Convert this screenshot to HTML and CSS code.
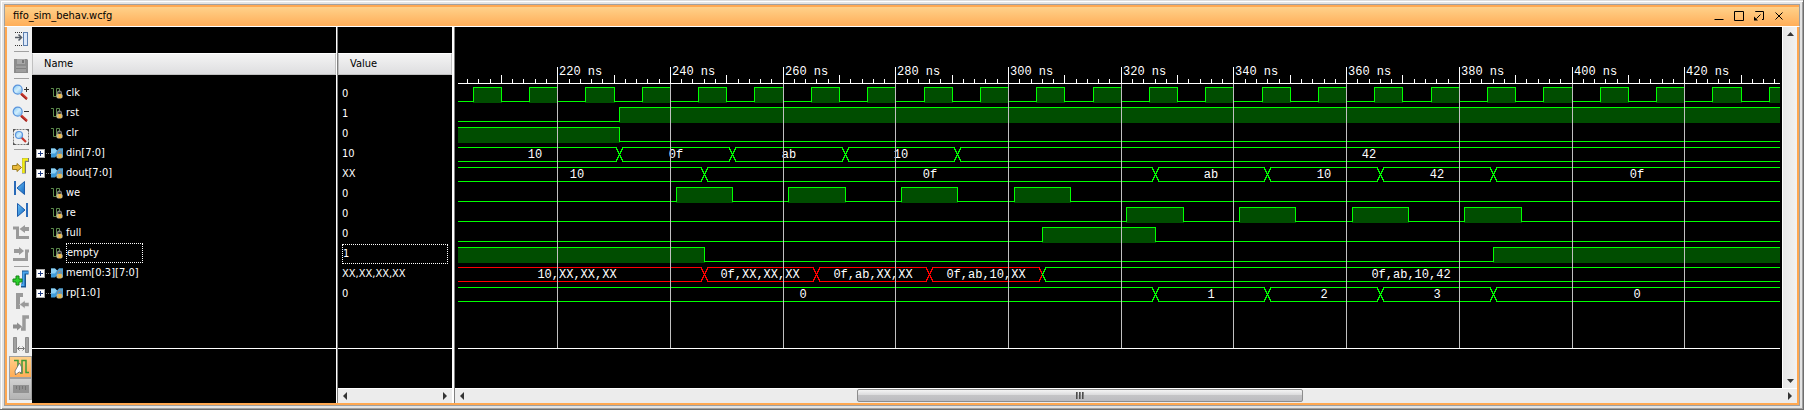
FILE: index.html
```html
<!DOCTYPE html>
<html lang="en">
<head>
<meta charset="utf-8">
<title>fifo_sim_behav.wcfg</title>
<link rel="stylesheet" href="styles.css">
</head>
<body>
<svg class="defs" aria-hidden="true">
  <defs>
    <linearGradient id="lens" x1="0" y1="0" x2="1" y2="1"><stop offset="0" stop-color="#7cc4f4"/><stop offset=".5" stop-color="#d2eefc"/><stop offset="1" stop-color="#6fb4ee"/></linearGradient>
    <linearGradient id="blue" x1="0" y1="0" x2="1" y2="1"><stop offset="0" stop-color="#6cc4f8"/><stop offset="1" stop-color="#1566c0"/></linearGradient>
    <symbol id="lock" viewBox="0 0 8 9">
      <path d="M2 4V2.5a2 2 0 0 1 4 0V4" fill="none" stroke="#8c8c8c" stroke-width="1.4"/>
      <rect x=".5" y="3.5" width="7" height="5.5" rx="2" fill="#c9b888"/>
      <rect x="3" y="4" width="2.6" height="4.4" fill="#f2b83c"/>
    </symbol>
    <symbol id="sig" viewBox="0 0 12 12">
      <path d="M0 1.5h2.5v8h3v-8h3v4" fill="none" stroke="#5c8a4c"/>
      <use href="#lock" x="5" y="3" width="7" height="9"/>
    </symbol>
    <symbol id="bus" viewBox="0 0 12 12">
      <path d="M0 1.500h4l2 2 2-2h4v9H8l-2-2-2 2H0z" fill="#3f9bd8"/>
      <path d="M0 1.500h4l2 2-2 3H0z" fill="#8fd0f2"/>
      <path d="M8 1.500h4v3H7z" fill="#5b9fcb"/>
      <use href="#lock" x="5" y="3" width="7" height="9"/>
    </symbol>
  </defs>
</svg>

<main class="window">
  <header class="titlebar">
    <h1 class="title">fifo_sim_behav.wcfg</h1>
    <div class="controls">
      <button class="control" aria-label="Minimize"><svg viewBox="0 0 10 10"><path d="M.5 8.500h9"/></svg></button>
      <button class="control" aria-label="Maximize"><svg viewBox="0 0 10 10"><path d="M.5 .5h9v9h-9z"/></svg></button>
      <button class="control" aria-label="Float"><svg viewBox="0 0 10 10"><path d="M1.500 1V.5h8v8H8M6.500 3.500l-4 4"/><path d="M0 5.500v4h4z" fill="#000" stroke="none"/></svg></button>
      <button class="control" aria-label="Close"><svg viewBox="0 0 10 10"><path d="M1.500 1.500l7 7m0-7l-7 7"/></svg></button>
    </div>
  </header>

  <div class="content">
    <nav class="toolbar" aria-label="Wave tools">
      <button class="tool" aria-label="Dock"><svg viewBox="0 0 20 20"><path d="M4 3.500h8M4 16.500h8" stroke="#333" stroke-dasharray="1 1"/><path d="M4 8.500h6M7.500 5.500l3 3-3 3" fill="none" stroke="#555c66" stroke-width="1.500"/><rect x="12.500" y="3.500" width="4" height="13" fill="#dce8fa" stroke="#5d7fae"/></svg></button>
      <span class="sep"></span>
      <button class="tool" aria-label="Save"><svg viewBox="0 0 20 20"><path d="M3 3h13l1 1v13H3z" fill="#8c8c8c"/><path d="M6 3h8v5H6z" fill="#a8a8a8"/><path d="M11 4h2v3h-2z" fill="#777"/><path d="M5 10h10v6H5z" fill="#9e9e9e"/><path d="M5 12.500h10" stroke="#808080"/></svg></button>
      <span class="sep"></span>
      <button class="tool" aria-label="Zoom in"><svg viewBox="0 0 20 20"><path d="M10 10.500l6 5.500" stroke="#c8352c" stroke-width="2.500"/><path d="M10 11.500l5.500 5" stroke="#8c1c18"/><circle cx="6.700" cy="6.700" r="4.500" fill="url(#lens)" stroke="#5a94dc" stroke-width="1.200"/><path d="M13 6.500h5M15.500 4v5" stroke="#333"/></svg></button>
      <button class="tool" aria-label="Zoom out"><svg viewBox="0 0 20 20"><path d="M10 10.500l6 5.500" stroke="#c8352c" stroke-width="2.500"/><path d="M10 11.500l5.500 5" stroke="#8c1c18"/><circle cx="6.700" cy="6.700" r="4.500" fill="url(#lens)" stroke="#5a94dc" stroke-width="1.200"/><path d="M13 6.500h5" stroke="#333"/></svg></button>
      <button class="tool" aria-label="Zoom fit"><svg viewBox="0 0 20 20"><rect x="2.500" y="2.500" width="15" height="15" fill="none" stroke="#777" stroke-dasharray="2 1"/><path d="M2 2h3L2 5zM18 2v3l-3-3zM2 18v-3l3 3zM18 18h-3l3-3z" fill="#555"/><path d="M10 10l5 5" stroke="#c8352c" stroke-width="2.200"/><circle cx="8" cy="8" r="3.500" fill="url(#lens)" stroke="#5a94dc" stroke-width="1.200"/></svg></button>
      <span class="sep sep--wide"></span>
      <button class="tool" aria-label="Go to time"><svg viewBox="0 0 20 20"><path d="M13 17.500V4h5" fill="none" stroke="#777" stroke-width="4"/><path d="M12.500 17V3.500H17" fill="none" stroke="#f4ee10" stroke-width="2.500"/><path d="M1.500 9.500H6v-2l4.500 4L6 15.500v-2H1.500z" fill="#e8b93c" stroke="#9a7a1c"/></svg></button>
      <button class="tool" aria-label="Previous transition"><svg viewBox="0 0 20 20"><path d="M3 3h2v14H3z" fill="#2a6ab8"/><path d="M13.500 3.500v13L6 10z" fill="url(#blue)" stroke="#1c5cab"/></svg></button>
      <button class="tool" aria-label="Next transition"><svg viewBox="0 0 20 20"><path d="M15 3h2v14h-2z" fill="#2a6ab8"/><path d="M6.500 3.500v13L14 10z" fill="url(#blue)" stroke="#1c5cab"/></svg></button>
      <button class="tool" aria-label="Previous edge"><svg viewBox="0 0 20 20"><path d="M2 6h4.500v9.500H18" fill="none" stroke="#9a9a9a" stroke-width="3"/><path d="M18 5h-4V3L8.500 7l5.500 4V9h4z" fill="#9a9a9a"/></svg></button>
      <button class="tool" aria-label="Next edge"><svg viewBox="0 0 20 20"><path d="M2 15.500h13.500V7H18" fill="none" stroke="#9a9a9a" stroke-width="3"/><path d="M3 5h5V3l5 4-5 4V9H3z" fill="#9a9a9a"/></svg></button>
      <span class="sep sep--tight"></span>
      <button class="tool" aria-label="Add marker"><svg viewBox="0 0 20 20"><path d="M10 16.500h3v-13h4.500" fill="none" stroke="#1a5590" stroke-width="4"/><path d="M10 16h2.500V3.500h5" fill="none" stroke="#4aa6ee" stroke-width="2"/><path d="M5 7h3v3h3v3H8v3H5v-3H2v-3h3z" fill="#2cd02c" stroke="#148414"/></svg></button>
      <button class="tool" aria-label="Previous marker"><svg viewBox="0 0 20 20"><path d="M7 18V4h5" fill="none" stroke="#9a9a9a" stroke-width="4"/><path d="M18 11.500h-4v-2L8.500 13.500l5.500 4v-2h4z" fill="#9a9a9a" stroke="#eee" stroke-width=".5"/></svg></button>
      <button class="tool" aria-label="Next marker"><svg viewBox="0 0 20 20"><path d="M10 16h3V4h5" fill="none" stroke="#9a9a9a" stroke-width="3.500"/><path d="M2 11.500h4v-2l5 4-5 4v-2H2z" fill="#8e8e8e"/></svg></button>
      <button class="tool" aria-label="Measure"><svg viewBox="0 0 20 20"><path d="M2.500 2.500h3v15h-3zM14.500 2.500h3v15h-3z" fill="#a0a0a0" stroke="#8c8c8c"/><path d="M7 13.500h6M8.500 11.500l-2 2 2 2M11.500 11.500l2 2-2 2" fill="none" stroke="#777"/></svg></button>
      <button class="tool tool--active" aria-label="Snap to transition" aria-pressed="true"><svg viewBox="0 0 20 20"><path d="M3 3.500h4V15M9 16h2V3.500h4V15.500h3" fill="none" stroke="#3f9a36" stroke-width="1.500"/><path d="M8.500 6l2 4v6l-2-1-2 1-2 2-.5-4z" fill="#fff" stroke="#666" stroke-width=".8"/></svg></button>
      <button class="tool tool--ruler" aria-label="Floating ruler"><svg viewBox="0 0 20 20"><path d="M2 6h16v8H2z" fill="#929292"/><path d="M5.500 7v3M8.500 7v4M11.500 7v3M14.500 7v4" stroke="#777"/></svg></button>
    </nav>

    <section class="pane pane--name">
      <div class="blank"></div>
      <h2 class="head">Name</h2>
      <ul class="rows">
        <li class="row"><svg class="kind"><use href="#sig"/></svg><span>clk</span></li>
        <li class="row"><svg class="kind"><use href="#sig"/></svg><span>rst</span></li>
        <li class="row"><svg class="kind"><use href="#sig"/></svg><span>clr</span></li>
        <li class="row row--bus"><button class="expand" aria-label="Expand din"></button><svg class="kind"><use href="#bus"/></svg><span>din[7:0]</span></li>
        <li class="row row--bus"><button class="expand" aria-label="Expand dout"></button><svg class="kind"><use href="#bus"/></svg><span>dout[7:0]</span></li>
        <li class="row"><svg class="kind"><use href="#sig"/></svg><span>we</span></li>
        <li class="row"><svg class="kind"><use href="#sig"/></svg><span>re</span></li>
        <li class="row"><svg class="kind"><use href="#sig"/></svg><span>full</span></li>
        <li class="row"><svg class="kind"><use href="#sig"/></svg><span class="focus focus--name">empty</span></li>
        <li class="row row--bus"><button class="expand" aria-label="Expand mem"></button><svg class="kind"><use href="#bus"/></svg><span>mem[0:3][7:0]</span></li>
        <li class="row row--bus"><button class="expand" aria-label="Expand rp"></button><svg class="kind"><use href="#bus"/></svg><span>rp[1:0]</span></li>
      </ul>
    </section>

    <section class="pane pane--value">
      <div class="blank"></div>
      <h2 class="head">Value</h2>
      <ul class="rows rows--value">
        <li class="row">0</li>
        <li class="row">1</li>
        <li class="row">0</li>
        <li class="row">10</li>
        <li class="row">XX</li>
        <li class="row">0</li>
        <li class="row">0</li>
        <li class="row">0</li>
        <li class="row"><span class="focus focus--value">1</span></li>
        <li class="row">XX,XX,XX,XX</li>
        <li class="row">0</li>
      </ul>
      <div class="hscroll">
        <button class="arrow" aria-label="Scroll left"><svg viewBox="0 0 8 8"><path d="M6 0v8L2 4z"/></svg></button>
        <button class="arrow" aria-label="Scroll right"><svg viewBox="0 0 8 8"><path d="M2 0v8l4-4z"/></svg></button>
      </div>
    </section>

    <section class="viewer">
      <div class="view">
        <div class="canvas"><svg class="wave" id="wave" role="img" aria-label="Signal waveforms"></svg></div>
        <div class="vscroll">
          <button class="arrow" aria-label="Scroll up"><svg viewBox="0 0 8 8"><path d="M1 6h7L4.500 2z"/></svg></button>
          <button class="arrow" aria-label="Scroll down"><svg viewBox="0 0 8 8"><path d="M1 2h7L4.500 6z"/></svg></button>
        </div>
      </div>
      <div class="hscroll hscroll--wave">
        <button class="arrow" aria-label="Scroll left"><svg viewBox="0 0 8 8"><path d="M6 0v8L2 4z"/></svg></button>
        <div class="track"><div class="thumb"><i></i><i></i><i></i></div></div>
        <button class="arrow" aria-label="Scroll right"><svg viewBox="0 0 8 8"><path d="M2 0v8l4-4z"/></svg></button>
      </div>
    </section>
  </div>
</main>
<script src="wave.js"></script>
</body>
</html>
```
FILE: styles.css
```css
* { box-sizing: border-box; }

body {
  margin: 0;
  background: #e4e4e4;
  color: #000;
  font: 11px/16px "DejaVu Sans Condensed", Tahoma, sans-serif;
}

button { margin: 0; padding: 0; border: 0; background: none; }
h1, h2 { margin: 0; font-size: inherit; font-weight: normal; }
ul { margin: 0; padding: 0; list-style: none; }
.defs { position: absolute; width: 0; height: 0; }

.window {
  display: flex;
  flex-direction: column;
  min-height: 100vh;
  padding: 4px 3px 3px 4px;
  background: #e4e4e4;
  border-right: 1px solid #6e6e6e;
  border-bottom: 1px solid #6e6e6e;
  box-shadow: inset 1px 1px #dcdcdc, inset 2px 2px #fff, inset -1px -1px #a0a0a0;
}

.titlebar {
  display: flex;
  align-items: center;
  justify-content: space-between;
  height: 23px;
  padding: 0 15px 0 8px;
  border: 1px solid #a0a0a0;
  border-bottom: 1px solid #fff;
  background: linear-gradient(#ffa851 2px, #ffd18a 2px, #ffae59);
}
.controls { display: flex; gap: 10px; }
.control { width: 10px; height: 10px; }
.control svg { display: block; width: 10px; height: 10px; fill: none; stroke: #000; }

.content {
  display: flex;
  flex: 1;
  border: solid #ffa851;
  border-width: 0 2px 2px;
  outline: 1px solid #a0a0a0;
  margin: 0 1px 1px;
  clip-path: inset(0 -1px -1px);
}

.toolbar {
  display: flex;
  flex-direction: column;
  width: 25px;
  padding: 1px 0 0 2px;
  background: #f0f0f0;
}
.tool { display: flex; align-items: center; justify-content: center; width: 23px; height: 22px; }
.tool svg { width: 20px; height: 20px; flex: none; }
.tool--active { border: 1px solid #a0a0a0; background: linear-gradient(#ffcf8a, #ffad57); }
.tool--ruler { border: 1px solid #a0a0a0; background: linear-gradient(#d2d2d2, #b4b4b4); }
.sep { height: 5px; margin-left: 5px; margin-right: 3px; background: linear-gradient(#a0a0a0, #a0a0a0) 0 1px / 100% 1px no-repeat; }
.sep--wide { height: 7px; }
.sep--tight { height: 3px; }

.pane { display: flex; flex-direction: column; background: #000; color: #fff; }
.pane--name { width: 306px; border-right: 1px solid #808080; box-shadow: inset -1px 0 #fff; padding-right: 1px; }
.pane--value { width: 117px; border-right: 1px solid #808080; box-shadow: inset -2px 0 #fff; padding-right: 2px; }
.blank { height: 26px; }
.head {
  height: 22px;
  padding: 2px 0 0 11px;
  border: 1px solid #c0c0c0;
  border-top-color: #fff;
  background: linear-gradient(#f4f4f4, #dedee0);
  color: #000;
}
.rows { padding: 8px 0 45px; border-bottom: 1px solid #fff; }
.rows--value { padding: 9px 0 44px 4px; }
.row { display: flex; align-items: center; gap: 3px; height: 20px; padding-left: 19px; }
.row--bus { gap: 0; padding-left: 4px; }
.rows--value .row { padding-left: 0; }
.kind { width: 12px; height: 12px; }
.row--bus .kind { margin-left: 6px; margin-right: 3px; }
.expand {
  position: relative;
  width: 9px;
  height: 9px;
  border: 1px solid #aaa;
  background:
    linear-gradient(#203a80, #203a80) center / 5px 1px no-repeat,
    linear-gradient(#203a80, #203a80) center / 1px 5px no-repeat,
    #fff;
}
.expand::after {
  content: "";
  position: absolute;
  left: 9px;
  top: 3px;
  width: 5px;
  border-top: 1px dotted #808080;
}
.focus { height: 20px; border: 1px dotted #fff; line-height: 18px; }
.focus--name { width: 77px; }
.focus--value { width: 106px; }

.hscroll {
  display: flex;
  justify-content: space-between;
  height: 15px;
  margin-top: auto;
  border-top: 1px solid #fff;
  background: #ececec;
}
.arrow { width: 14px; height: 14px; display: flex; align-items: center; justify-content: center; }
.arrow svg { width: 8px; height: 8px; fill: #333; }

.viewer { display: flex; flex: 1; flex-direction: column; min-width: 0; }
.view { display: flex; flex: 1; }
.canvas { flex: 1; min-width: 0; padding: 0 2px 0 3px; background: #000; }
.wave { display: block; width: 100%; height: 322px; shape-rendering: crispEdges; }
.vscroll {
  display: flex;
  flex-direction: column;
  justify-content: space-between;
  width: 15px;
  border-left: 1px solid #fff;
  background: linear-gradient(90deg, #e6e6e6, #f2f2f2);
}
.track { flex: 1; }
.thumb {
  display: flex;
  align-items: center;
  justify-content: center;
  gap: 1px;
  width: 34%;
  height: 13px;
  margin-left: 29.5%;
  border: 1px solid #8c8c8c;
  border-radius: 2px;
  background: linear-gradient(#f4f4f4, #d8d8da 50%, #c4c4c6 50%, #bcbcc0);
}
.thumb i { width: 2px; height: 7px; background: linear-gradient(90deg, #333, #999); }

.line { fill: none; stroke: #0f0; }
.line--unknown { stroke: #f00; }
.fill { fill: #004d00; }
.axis { fill: none; stroke: #fff; }
.grid { fill: none; stroke: #c0c0c0; }
.label { fill: #fff; font: 12px "Liberation Mono", monospace; }
.label--mid { text-anchor: middle; }
```
FILE: wave.js
```js
const svg = document.getElementById('wave');
const NS = 'http://www.w3.org/2000/svg';
const PX_PER_NS = 5.635;
const T0 = 202.39;
const LEFT = -8;          // the view starts slightly before its visible edge
const ROW = 20;
const TOP = 60;
const AXIS = 56;
const BOTTOM = 321;

const clock = [];
for (let t = 205; t < 800; t += 10) clock.push([t, t + 5]);

const signals = [
  { high: clock },
  { high: [[231, Infinity]] },
  { high: [[0, 231]] },
  { bus: [[0, '10'], [231, '0f'], [251, 'ab'], [271, '10'], [291, '42']] },
  { bus: [[0, '10'], [246, '0f'], [326, 'ab'], [346, '10'], [366, '42'], [386, '0f']] },
  { high: [[241, 251], [261, 271], [281, 291], [301, 311]] },
  { high: [[321, 331], [341, 351], [361, 371], [381, 391]] },
  { high: [[306, 326]] },
  { high: [[0, 246], [386, Infinity]] },
  { bus: [[0, '10,XX,XX,XX', 1], [246, '0f,XX,XX,XX', 1], [266, '0f,ab,XX,XX', 1], [286, '0f,ab,10,XX', 1], [306, '0f,ab,10,42']] },
  { bus: [[0, '0'], [326, '1'], [346, '2'], [366, '3'], [386, '0']] }
];

function add(name, attrs, text) {
  const el = document.createElementNS(NS, name);
  for (const key in attrs) el.setAttribute(key, attrs[key]);
  if (text) el.textContent = text;
  svg.appendChild(el);
}

function draw() {
  svg.replaceChildren();
  const width = svg.clientWidth;
  const x = t => Math.max(LEFT, Math.min(width, Math.round((t - T0) * PX_PER_NS)));
  const visible = t => (t - T0) * PX_PER_NS < width;

  signals.forEach((signal, i) => {
    const top = TOP + i * ROW;
    const hi = top + 0.5;
    const lo = top + 14.5;

    if (signal.high) {
      let d = `M${LEFT} ${lo}`;
      for (const [a, b] of signal.high.filter(r => visible(r[0]))) {
        const xa = x(a), xb = x(b);
        add('rect', { class: 'fill', x: Math.max(xa, 0), y: top, width: xb + 1 - Math.max(xa, 0), height: 16 });
        d += `H${xa + 0.5}V${hi}H${xb + 0.5}`;
        if (xb < width) d += `V${lo}`;
      }
      if (!d.endsWith(`H${width + 0.5}`)) d += `H${width}`;
      add('path', { class: 'line', d });
      return;
    }

    signal.bus.forEach(([t, text, unknown], n) => {
      const next = signal.bus[n + 1];
      const a = x(t), b = next ? x(next[0]) : width;
      const mid = top + 7.5;
      const start = n ? `M${a + 0.5} ${mid}L${a + 4} ` : `M${LEFT} `;
      const end = y => next ? `H${b - 3}L${b + 0.5} ${mid}` : `H${b}`;
      add('path', {
        class: unknown ? 'line line--unknown' : 'line',
        d: `${start}${hi}${end(hi)}${start}${lo}${end(lo)}`
      });
      add('text', { class: 'label label--mid', x: Math.round((a + b) / 2), y: top + 11 }, text);
    });
  });

  let grid = '', ticks = `M0 ${AXIS + 0.5}H${width}`;
  for (let t = 204; visible(t); t += 2) {
    const tx = x(t) + 0.5;
    const size = t % 20 === 0 ? 16 : t % 10 === 0 ? 8 : 4;
    ticks += `M${tx} ${AXIS - size}V${AXIS}`;
    if (size === 16) {
      grid += `M${tx} ${AXIS + 1}V${BOTTOM}`;
      add('text', { class: 'label', x: tx + 1.5, y: AXIS - 8 }, `${t} ns`);
    }
  }
  add('path', { class: 'grid', d: grid });
  add('path', { class: 'axis', d: `${ticks}M0 ${BOTTOM + 0.5}H${width}` });
}

draw();
window.addEventListener('resize', draw);
```
